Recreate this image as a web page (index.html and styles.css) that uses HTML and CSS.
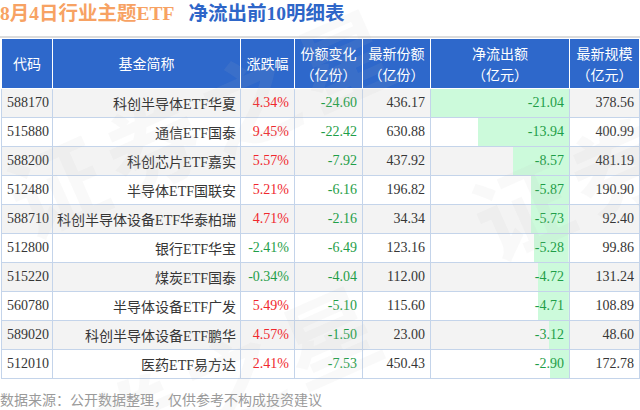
FILE: index.html
```html
<!DOCTYPE html>
<html lang="zh">
<head>
<meta charset="utf-8">
<title>8月4日行业主题ETF净流出前10明细表</title>
<link rel="stylesheet" href="styles.css">
</head>
<body>
<div class="page">
  <div class="title"><span class="t-orange">8月4日行业主题ETF</span><span class="t-blue">净流出前10明细表</span></div>
  <div class="table-wrap">
    <table class="etf">
      <colgroup>
        <col class="c1"><col class="c2"><col class="c3"><col class="c4"><col class="c5"><col class="c6"><col class="c7">
      </colgroup>
      <thead>
        <tr>
          <th>代码</th>
          <th>基金简称</th>
          <th>涨跌幅</th>
          <th>份额变化<br>（亿份）</th>
          <th>最新份额<br>（亿份）</th>
          <th>净流出额<br>（亿元）</th>
          <th>最新规模<br>（亿元）</th>
        </tr>
      </thead>
      <tbody>
        <tr><td class="code">588170</td><td class="name">科创半导体ETF华夏</td><td class="up">4.34%</td><td class="dn">-24.60</td><td>436.17</td><td class="bar dn" style="--w:100%">-21.04</td><td>378.56</td></tr>
        <tr><td class="code">515880</td><td class="name">通信ETF国泰</td><td class="up">9.45%</td><td class="dn">-22.42</td><td>630.88</td><td class="bar dn" style="--w:66.25%">-13.94</td><td>400.99</td></tr>
        <tr><td class="code">588200</td><td class="name">科创芯片ETF嘉实</td><td class="up">5.57%</td><td class="dn">-7.92</td><td>437.92</td><td class="bar dn" style="--w:40.73%">-8.57</td><td>481.19</td></tr>
        <tr><td class="code">512480</td><td class="name">半导体ETF国联安</td><td class="up">5.21%</td><td class="dn">-6.16</td><td>196.82</td><td class="bar dn" style="--w:27.9%">-5.87</td><td>190.90</td></tr>
        <tr><td class="code">588710</td><td class="name">科创半导体设备ETF华泰柏瑞</td><td class="up">4.71%</td><td class="dn">-2.16</td><td>34.34</td><td class="bar dn" style="--w:27.23%">-5.73</td><td>92.40</td></tr>
        <tr><td class="code">512800</td><td class="name">银行ETF华宝</td><td class="dn">-2.41%</td><td class="dn">-6.49</td><td>123.16</td><td class="bar dn" style="--w:25.1%">-5.28</td><td>99.86</td></tr>
        <tr><td class="code">515220</td><td class="name">煤炭ETF国泰</td><td class="dn">-0.34%</td><td class="dn">-4.04</td><td>112.00</td><td class="bar dn" style="--w:22.43%">-4.72</td><td>131.24</td></tr>
        <tr><td class="code">560780</td><td class="name">半导体设备ETF广发</td><td class="up">5.49%</td><td class="dn">-5.10</td><td>115.60</td><td class="bar dn" style="--w:22.39%">-4.71</td><td>108.89</td></tr>
        <tr><td class="code">589020</td><td class="name">科创半导体设备ETF鹏华</td><td class="up">4.57%</td><td class="dn">-1.50</td><td>23.00</td><td class="bar dn" style="--w:14.83%">-3.12</td><td>48.60</td></tr>
        <tr><td class="code">512010</td><td class="name">医药ETF易方达</td><td class="up">2.41%</td><td class="dn">-7.53</td><td>450.43</td><td class="bar dn" style="--w:13.78%">-2.90</td><td>172.78</td></tr>
      </tbody>
    </table>
  </div>
  <div class="footer">数据来源：公开数据整理，仅供参考不构成投资建议</div>
  <div class="watermark" aria-hidden="true">
    <span class="wm wm-a">证券之星</span>
    <span class="wm wm-b">证券之星</span>
    <span class="wm wm-c">证券之星</span>
  </div>
</div>
</body>
</html>
```

FILE: styles.css
```css
html, body {
  margin: 0;
  padding: 0;
  background: #ffffff;
}

.page {
  position: relative;
  width: 640px;
  height: 410px;
  overflow: hidden;
}

.title {
  height: 36px;
  line-height: 28px;
  font-family: "Liberation Serif", "Noto Sans CJK SC", serif;
  font-weight: bold;
  font-size: 19.5px;
  white-space: nowrap;
}

.t-orange {
  color: #f7a263;
}

.t-blue {
  color: #2e66c8;
  margin-left: 14px;
}

.table-wrap {
  border-top: 2px solid #dcdcdc;
  padding-left: 1px;
}

.etf {
  border-collapse: collapse;
  table-layout: fixed;
  width: 638px;
}

.c1 { width: 51px; }
.c2 { width: 188px; }
.c3 { width: 54px; }
.c4 { width: 68px; }
.c5 { width: 68px; }
.c6 { width: 139px; }
.c7 { width: 70px; }

.etf th {
  background: #2e68cb;
  color: #ffffff;
  border: 1px solid #ffffff;
  height: 49px;
  padding: 0;
  font-family: "Noto Sans CJK SC", sans-serif;
  font-weight: normal;
  font-size: 14px;
  line-height: 21px;
  text-align: center;
}

.etf td {
  border: 1px solid #c4d4ea;
  height: 28px;
  padding: 0 5px;
  font-family: "Liberation Serif", "Noto Sans CJK SC", serif;
  font-size: 14px;
  color: #363636;
  text-align: right;
  white-space: nowrap;
  background-color: #ffffff;
}

.etf tbody tr:nth-child(odd) td {
  background-color: #f3f3f3;
}

.etf td.code {
  text-align: left;
}

.etf td.name {
  padding: 0 4px;
}

.etf td.up {
  color: #f0282d;
}

.etf td.dn {
  color: #1f9e48;
}

.etf td.bar {
  background-image: linear-gradient(#ccfadb, #ccfadb);
  background-repeat: no-repeat;
  background-position: right top;
  background-size: var(--w) 100%;
}

.footer {
  padding-top: 10px;
  line-height: 20px;
  font-family: "Noto Sans CJK SC", sans-serif;
  font-size: 14px;
  color: #9a9a9a;
  white-space: nowrap;
}

.watermark {
  position: absolute;
  inset: 0;
  pointer-events: none;
}

.wm {
  position: absolute;
  font-family: "Noto Sans CJK SC", sans-serif;
  font-weight: bold;
  font-size: 95px;
  line-height: 95px;
  letter-spacing: 10px;
  white-space: nowrap;
  color: rgba(190, 190, 190, 0.09);
  transform-origin: 0 47.5px;
  transform: rotate(-24deg);
}

.wm-a { left: 12px; top: 155px; }
.wm-b { left: 477px; top: 177px; }
.wm-c { left: -3px; top: 432px; }
```
